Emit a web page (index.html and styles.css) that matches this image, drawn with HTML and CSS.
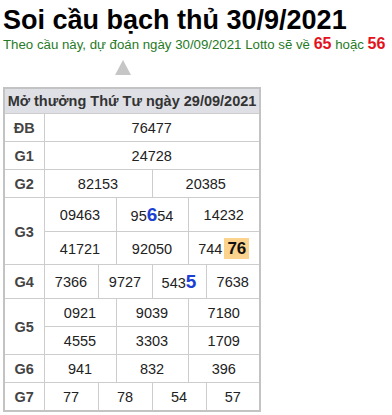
FILE: index.html
```html
<!DOCTYPE html>
<html lang="vi">
<head>
<meta charset="utf-8">
<title>Soi cầu bạch thủ 30/9/2021</title>
<link rel="stylesheet" href="styles.css">
</head>
<body>
<div class="page">
  <h1 class="title">Soi cầu bạch thủ 30/9/2021</h1>
  <p class="predict">Theo cầu này, dự đoán ngày 30/09/2021 Lotto sẽ về <b class="hot">65</b> hoặc <b class="hot">56</b></p>
  <div class="arrow"></div>
  <table class="kq">
    <colgroup>
      <col class="c-label">
      <col><col><col><col><col><col><col><col><col><col><col><col>
    </colgroup>
    <thead>
      <tr><th class="head" colspan="13">Mở thưởng Thứ Tư ngày 29/09/2021</th></tr>
    </thead>
    <tbody>
      <tr><td class="lbl">ĐB</td><td colspan="12">76477</td></tr>
      <tr><td class="lbl">G1</td><td colspan="12">24728</td></tr>
      <tr><td class="lbl">G2</td><td colspan="6">82153</td><td colspan="6">20385</td></tr>
      <tr><td class="lbl" rowspan="2">G3</td><td colspan="4">09463</td><td colspan="4">95<span class="pick">6</span>54</td><td colspan="4">14232</td></tr>
      <tr><td colspan="4">41721</td><td colspan="4">92050</td><td colspan="4">744<span class="mark">76</span></td></tr>
      <tr><td class="lbl">G4</td><td colspan="3">7366</td><td colspan="3">9727</td><td colspan="3">543<span class="pick">5</span></td><td colspan="3">7638</td></tr>
      <tr><td class="lbl" rowspan="2">G5</td><td colspan="4">0921</td><td colspan="4">9039</td><td colspan="4">7180</td></tr>
      <tr><td colspan="4">4555</td><td colspan="4">3303</td><td colspan="4">1709</td></tr>
      <tr><td class="lbl">G6</td><td colspan="4">941</td><td colspan="4">832</td><td colspan="4">396</td></tr>
      <tr><td class="lbl">G7</td><td colspan="3">77</td><td colspan="3">78</td><td colspan="3">54</td><td colspan="3">57</td></tr>
    </tbody>
  </table>
</div>
</body>
</html>
```
FILE: styles.css
```css
html, body {
  margin: 0;
  padding: 0;
  background: #ffffff;
}

.page {
  padding: 4px 0 0 3px;
  font-family: "Liberation Sans", Arial, sans-serif;
  color: #222;
}

.title {
  margin: 0;
  font-size: 27px;
  line-height: 32px;
  font-weight: bold;
  color: #000;
}

.predict {
  margin: 0;
  font-size: 13.25px;
  line-height: 16px;
  color: #267a26;
}

.hot {
  font-size: 16px;
  color: #e3121c;
}

.arrow {
  width: 0;
  height: 0;
  margin: 7px 0 0 112px;
  border-left: 8px solid transparent;
  border-right: 8px solid transparent;
  border-bottom: 15px solid #c6c6c6;
}

.kq {
  margin-top: 12px;
  width: 258px;
  table-layout: fixed;
  border-collapse: collapse;
  border: 2px solid #c3c3c3;
  font-size: 14.5px;
}

.c-label {
  width: 40px;
}

.kq th,
.kq td {
  border: 1px solid #cdcdcd;
  text-align: center;
  vertical-align: middle;
  padding: 6px 0 5px;
  white-space: nowrap;
}

.kq .head {
  padding: 4px 0;
  background: #dfe0e6;
  color: #333;
  font-weight: bold;
}

.kq .lbl {
  font-weight: bold;
  color: #444;
}

.pick {
  font-size: 19px;
  font-weight: bold;
  color: #1c3fd4;
}

.mark {
  display: inline-block;
  padding: 2px 3px;
  margin-left: 2px;
  font-size: 17px;
  line-height: 17px;
  font-weight: bold;
  color: #111;
  background: #fcd38c;
}
```
